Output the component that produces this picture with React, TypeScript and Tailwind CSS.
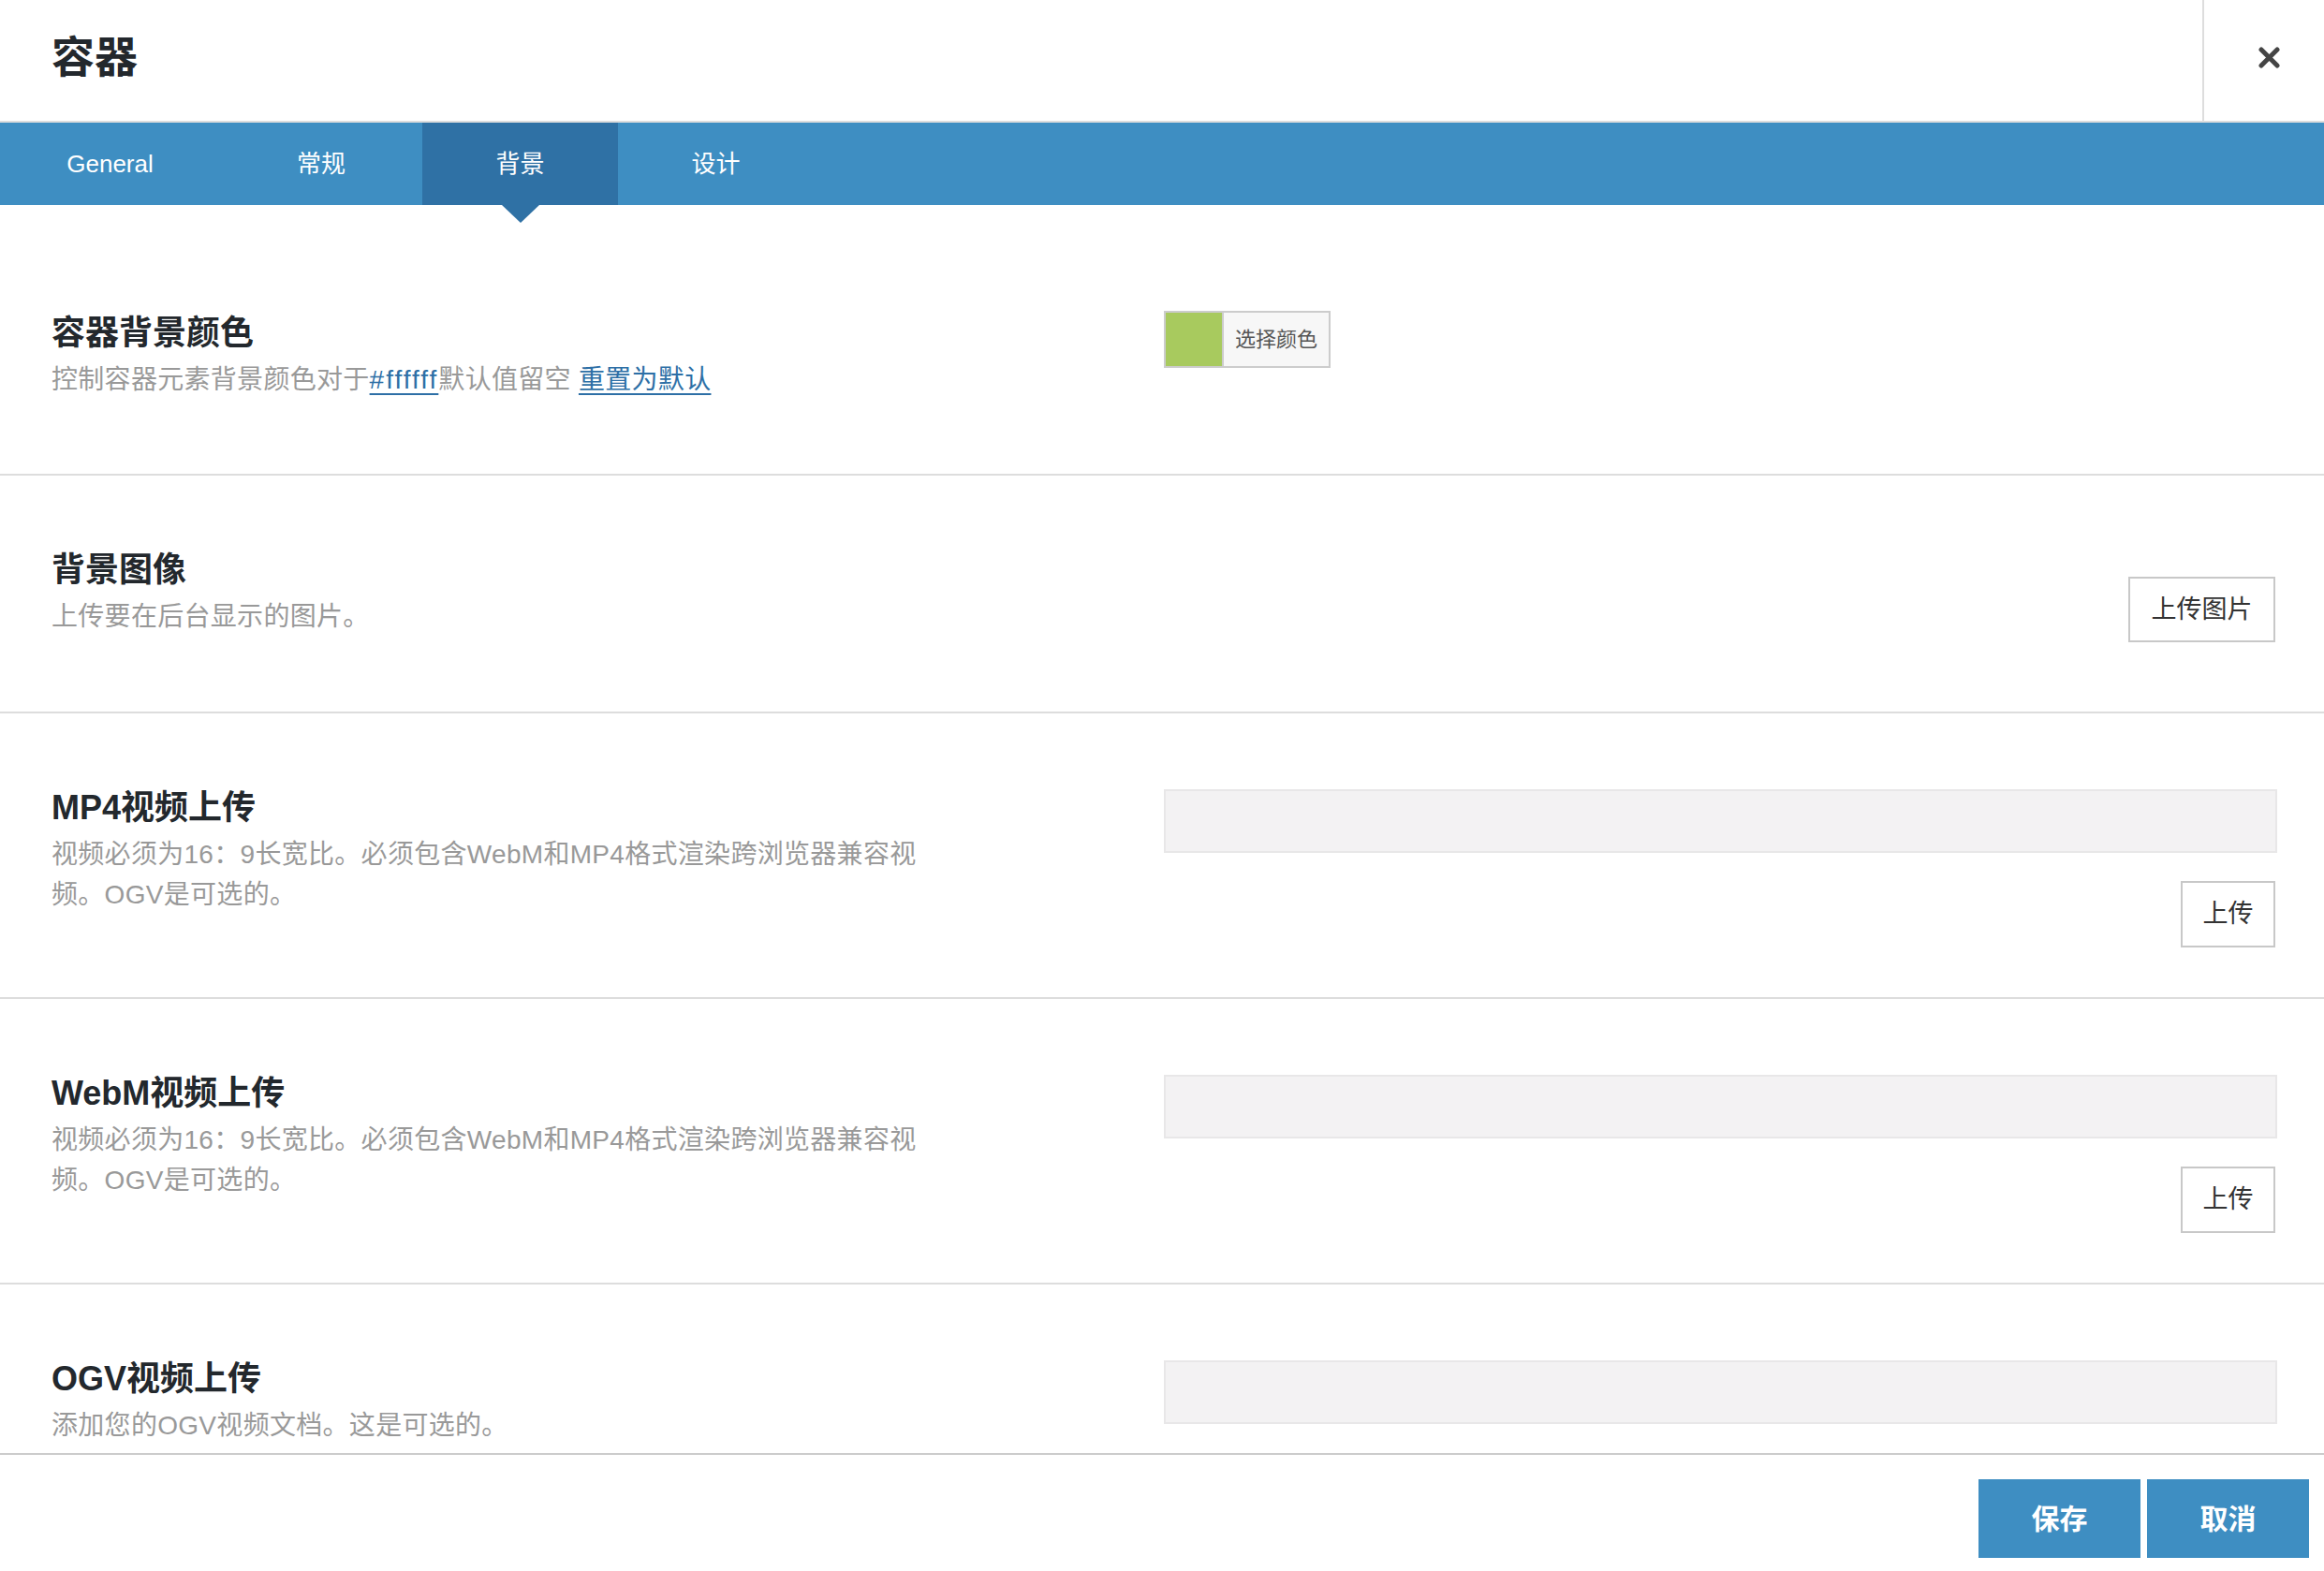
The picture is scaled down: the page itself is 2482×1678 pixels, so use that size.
import React from 'react';

const FONT = { fontFamily: '"Liberation Sans", "Noto Sans CJK SC", sans-serif' };

type Tab = { label: string; width: string; active?: boolean };

const tabs: Tab[] = [
  { label: 'General', width: 'w-[235px]' },
  { label: '常规', width: 'w-[216px]' },
  { label: '背景', width: 'w-[209px]', active: true },
  { label: '设计', width: 'w-[209px]' },
];

const OptionText: React.FC<{ title: string; children: React.ReactNode }> = ({ title, children }) => (
  <div className="flex-1 min-w-0">
    <h3 className="text-[36px] leading-[50px] font-bold text-[#23282d]">{title}</h3>
    <p className="mt-[3px] text-[28px] leading-[43px] tracking-[0.3px] text-[#999999] whitespace-nowrap">{children}</p>
  </div>
);

const OutlineButton: React.FC<{ label: string; className?: string }> = ({ label, className = '' }) => (
  <button
    className={`border-2 border-[#c8c8c8] bg-white text-[27px] text-[#333333] flex items-center justify-center ${className}`}
  >
    {label}
  </button>
);

const VideoUpload: React.FC<{ withButton?: boolean }> = ({ withButton = true }) => (
  <div className="w-[1189px] flex flex-col items-end mt-[5px]">
    <div className="w-full h-[68px] bg-[#f3f2f3] border-2 border-[#e8e7e8]" />
    {withButton && <OutlineButton label="上传" className="mt-[30px] mr-[2px] w-[101px] h-[71px]" />}
  </div>
);

export default function App() {
  return (
    <div className="w-[2482px] h-[1678px] flex flex-col bg-white overflow-hidden" style={FONT}>
      {/* header */}
      <div className="h-[131px] flex border-b-2 border-[#dddddd] shrink-0">
        <div className="flex-1 flex items-center pl-[55px] pb-[6px]">
          <h1 className="text-[46px] font-bold text-[#23282d]">容器</h1>
        </div>
        <div className="w-[130px] border-l-2 border-[#dddddd] flex items-center pl-[58px] pb-[6px]">
          <svg width="23" height="23" viewBox="0 0 23 23">
            <path d="M3 3 L20 20 M20 3 L3 20" stroke="#444444" strokeWidth="5" strokeLinecap="round" />
          </svg>
        </div>
      </div>

      {/* tabs */}
      <div className="h-[88px] bg-[#3e8ec2] flex shrink-0 relative z-10">
        {tabs.map((t) => (
          <div
            key={t.label}
            className={`${t.width} relative flex items-center justify-center text-[26px] text-white ${
              t.active ? 'bg-[#2f71a5]' : ''
            }`}
          >
            {t.label}
            {t.active && (
              <span className="absolute left-1/2 -translate-x-1/2 top-full w-0 h-0 border-l-[20px] border-r-[20px] border-t-[19px] border-l-transparent border-r-transparent border-t-[#2f71a5]" />
            )}
          </div>
        ))}
      </div>

      {/* options */}
      <div className="flex-1 min-h-0 overflow-hidden pt-[35px]">
        <div className="flex items-start pl-[55px] pr-[50px] pt-[77px] pb-[79px] border-b-2 border-[#dddddd]">
          <OptionText title="容器背景颜色">
            控制容器元素背景颜色对于
            <a className="text-[#2d6fa6] underline decoration-2 underline-offset-[5px] tracking-[2px]">#ffffff</a>
            默认值留空{' '}
            <a className="text-[#2d6fa6] underline decoration-2 underline-offset-[5px]">重置为默认</a>
          </OptionText>
          <div className="w-[1189px] mt-[1px]">
            <div className="inline-flex h-[61px] border-2 border-[#cccccc]">
              <div className="w-[60px] bg-[#a8ca5e]" />
              <div className="w-[114px] border-l-2 border-[#cccccc] bg-[#f7f7f7] flex items-center justify-center text-[22px] text-[#555555]">
                选择颜色
              </div>
            </div>
          </div>
        </div>

        <div className="flex items-start pl-[55px] pr-[50px] pt-[76px] pb-[74px] border-b-2 border-[#dddddd]">
          <OptionText title="背景图像">上传要在后台显示的图片。</OptionText>
          <div className="w-[1189px] flex justify-end mt-[32px]">
            <OutlineButton label="上传图片" className="w-[157px] h-[70px] mr-[2px]" />
          </div>
        </div>

        <div className="flex items-start pl-[55px] pr-[50px] pt-[76px] pb-[53px] border-b-2 border-[#dddddd]">
          <OptionText title="MP4视频上传">
            视频必须为16：9长宽比。必须包含WebM和MP4格式渲染跨浏览器兼容视
            <br />
            频。OGV是可选的。
          </OptionText>
          <VideoUpload />
        </div>

        <div className="flex items-start pl-[55px] pr-[50px] pt-[76px] pb-[53px] border-b-2 border-[#dddddd]">
          <OptionText title="WebM视频上传">
            视频必须为16：9长宽比。必须包含WebM和MP4格式渲染跨浏览器兼容视
            <br />
            频。OGV是可选的。
          </OptionText>
          <VideoUpload />
        </div>

        <div className="flex items-start pl-[55px] pr-[50px] pt-[76px] pb-[53px]">
          <OptionText title="OGV视频上传">添加您的OGV视频文档。这是可选的。</OptionText>
          <VideoUpload withButton={false} />
        </div>
      </div>

      {/* footer */}
      <div className="h-[126px] shrink-0 border-t-2 border-[#cccccc] flex justify-end items-start gap-[7px] pt-[26px] pr-[16px]">
        <button className="w-[173px] h-[84px] bg-[#3e8ec2] text-white text-[30px] font-bold">保存</button>
        <button className="w-[173px] h-[84px] bg-[#3e8ec2] text-white text-[30px] font-bold">取消</button>
      </div>
    </div>
  );
}
